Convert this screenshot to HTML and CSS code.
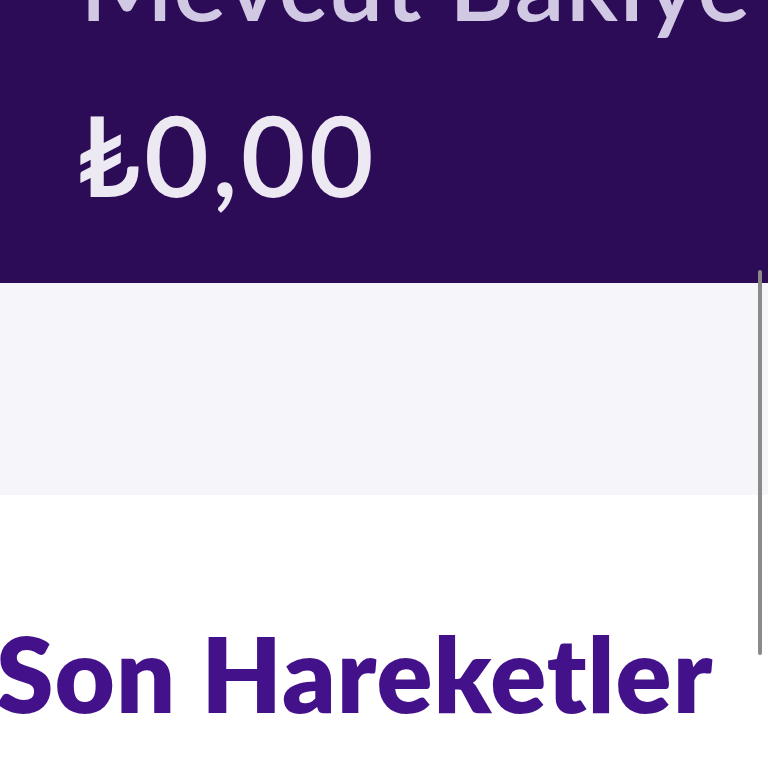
FILE: index.html
```html
<!DOCTYPE html>
<html lang="tr">
<head>
<meta charset="utf-8">
<link rel="stylesheet" href="styles.css">
</head>
<body>
<div class="balance">
  <div class="label">Mevcut Bakiye</div>
  <div class="amount">₺0,00</div>
</div>
<div class="band"></div>
<div class="recent">
  <h2 class="title">Son Hareketler</h2>
</div>
<div class="scrollbar"></div>
</body>
</html>
```
FILE: styles.css
```css
html, body {
  margin: 0;
  padding: 0;
  background: #ffffff;
  overflow: hidden;
  font-family: Lato, "Open Sans", sans-serif;
}
.balance {
  background: #2c0c57;
  height: 283px;
  padding-left: 80px;
  box-sizing: border-box;
  overflow: hidden;
}
.label {
  font-size: 100px;
  line-height: 1;
  font-weight: 600;
  letter-spacing: 1.2px;
  color: #d1c9e3;
  margin-top: -68px;
  white-space: nowrap;
}
.amount {
  font-size: 112px;
  line-height: 1;
  font-weight: 600;
  letter-spacing: 3px;
  color: #ede9f3;
  margin-top: 66px;
  margin-left: -4px;
}
.band {
  background: #f6f5fa;
  height: 212px;
}
.recent {
  padding-top: 126px;
}
.title {
  margin: 0 0 0 -4px;
  font-size: 104px;
  line-height: 1;
  font-weight: 800;
  letter-spacing: 1px;
  color: #43128a;
  white-space: nowrap;
}
.scrollbar {
  position: absolute;
  left: 758px;
  top: 270px;
  width: 4px;
  height: 385px;
  background: #8a8a8a;
  border-radius: 2px;
}
```
